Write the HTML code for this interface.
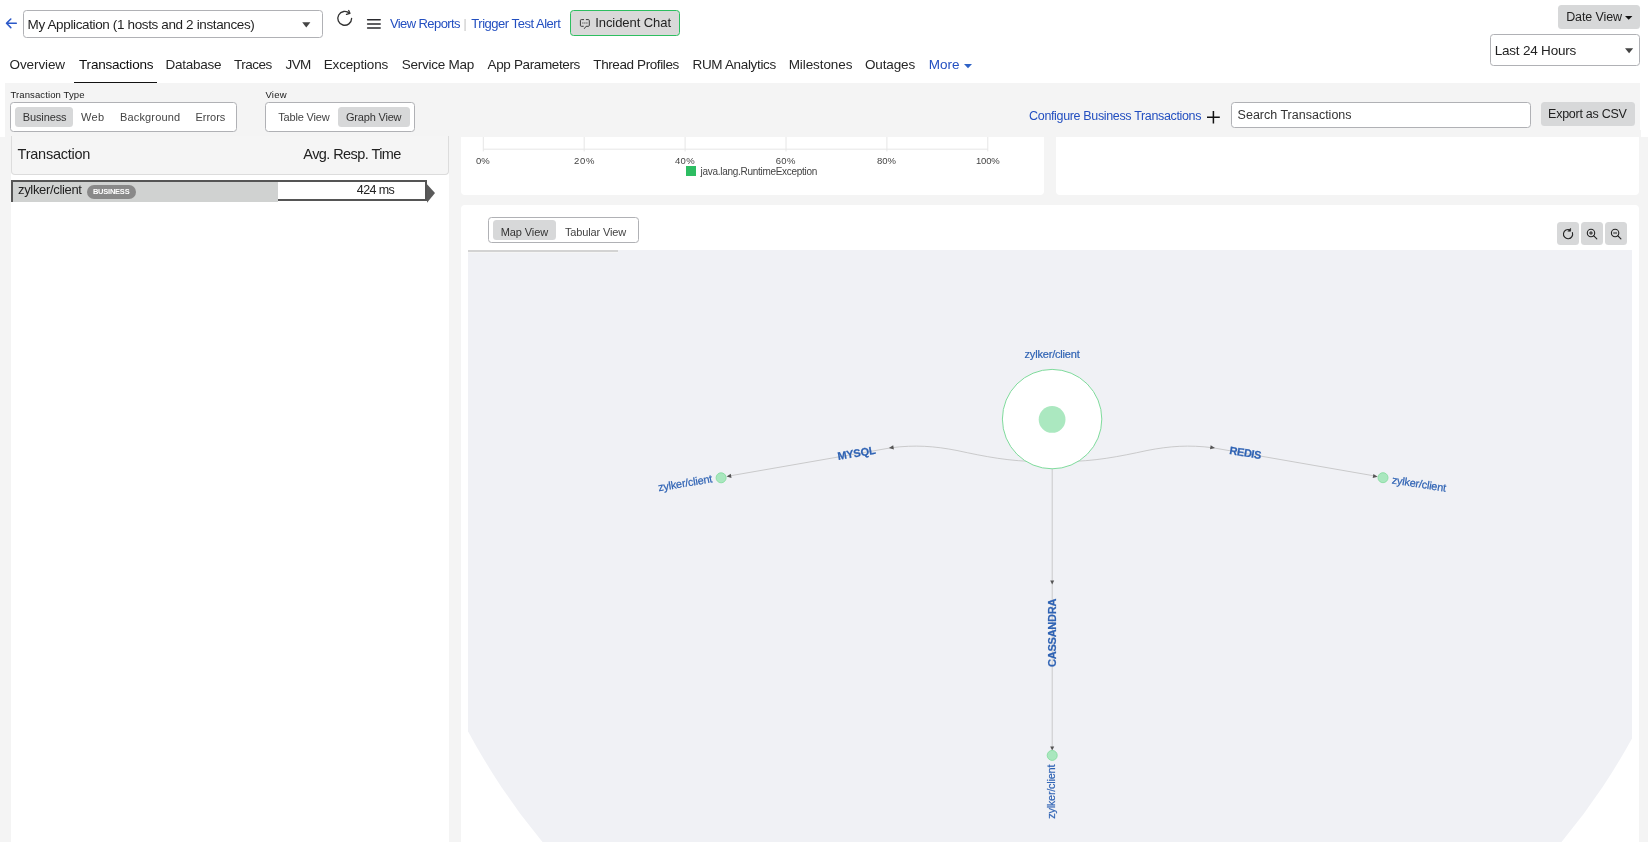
<!DOCTYPE html>
<html><head><meta charset="utf-8"><title>Transactions</title>
<style>
html,body{margin:0;padding:0;overflow:hidden;}
body{width:1648px;height:842px;overflow:hidden;background:#fff;font-family:"Liberation Sans",sans-serif;position:relative;}
.a{position:absolute;box-sizing:border-box;}
.t{position:absolute;white-space:nowrap;line-height:1;font-family:"Liberation Sans",sans-serif;}
.box{border:1px solid #b0b1b5;border-radius:3.5px;background:#fff;}
.pill{background:#d7d8d9;border-radius:3.5px;}
.panel{background:#fff;border-radius:4px;}
svg{position:absolute;overflow:visible;}
</style></head><body>
<!-- page gray areas -->
<div class="a" style="left:5px;top:83px;width:1635px;height:54px;background:#f4f4f4"></div>
<div class="a" style="left:0;top:137px;width:1648px;height:705px;background:#f4f4f4"></div>

<!-- top bar -->
<svg style="left:4px;top:16px" width="16" height="14" viewBox="0 0 16 14"><path d="M12.3 7.3H2.9M6.8 3 2.5 7.3l4.3 4.3" fill="none" stroke="#2b58c8" stroke-width="1.55" stroke-linecap="round" stroke-linejoin="round"/></svg>
<div class="a box" style="left:23px;top:10px;width:299.5px;height:27.5px"></div>
<svg style="left:302px;top:22px" width="9" height="6" viewBox="0 0 9 6"><path d="M0.2 0.2h8.2L4.3 5.4z" fill="#444"/></svg>
<svg style="left:336px;top:9px" width="18" height="18" viewBox="336 9 18 18" fill="none" stroke="#333" stroke-width="1.35" stroke-linecap="round" stroke-linejoin="round"><path d="M351.6 18.4A6.9 6.9 0 1 1 349.5 13.4"/><path d="M348.7 10.5l1.2 2.8-3.4 1"/></svg>
<svg style="left:366px;top:17px" width="16" height="13" viewBox="366 17 16 13"><path d="M367.6 19.65h12.6M367.6 23.95h12.6M367.6 28.1h12.6" stroke="#2a2a2e" stroke-width="1.5" stroke-linecap="round" fill="none"/></svg>
<div class="a" style="left:569.8px;top:9.8px;width:110.4px;height:26.4px;background:#d9d9d9;border:1.2px solid #2dbe60;border-radius:3.5px"></div>
<svg style="left:578px;top:17px" width="14" height="14" viewBox="578 17 14 14" fill="none" stroke="#3a3a3a" stroke-width="1" stroke-linecap="round" stroke-linejoin="round"><path d="M586.3 19.6h2.1a.9 .9 0 0 1 .9 .9v4.9a.9 .9 0 0 1-.9 .9h-2.3l-1.7 2.2"/><path d="M583.3 26.3h-2a.9 .9 0 0 1-.9-.9v-4.9a.9 .9 0 0 1 .9-.9h2.3"/><path d="M582.5 23h.7M584.5 23h.7M586.5 23h.7" stroke-width="0.9" stroke="#555"/></svg>
<div class="a pill" style="left:1558px;top:5px;width:82px;height:24px;background:#d7d8d9"></div>
<svg style="left:1624.5px;top:16px" width="8" height="4" viewBox="0 0 8 4"><path d="M0 0h7.4L3.7 3.8z" fill="#111"/></svg>
<div class="a box" style="left:1490px;top:34px;width:150px;height:32px"></div>
<svg style="left:1625px;top:48px" width="9" height="6" viewBox="0 0 9 6"><path d="M0 0.2h8.2L4.1 5.2z" fill="#444"/></svg>

<!-- nav -->
<div class="a" style="left:74px;top:82px;width:83px;height:1px;background:#111"></div>
<svg style="left:964px;top:63.6px" width="9" height="5" viewBox="0 0 9 5"><path d="M0 0h8L4 4.2z" fill="#2f62c6"/></svg>

<!-- filter bar -->
<div class="a box" style="left:10px;top:102px;width:227px;height:30px"></div>
<div class="a pill" style="left:15px;top:107px;width:58px;height:20px"></div>
<div class="a box" style="left:265px;top:102px;width:150px;height:30px"></div>
<div class="a pill" style="left:338px;top:107px;width:72px;height:20px"></div>
<svg style="left:1206px;top:110px" width="15" height="15" viewBox="0 0 15 15"><path d="M7.4 1v12.6M1 7.3h12.8" stroke="#111" stroke-width="1.5" fill="none"/></svg>
<div class="a box" style="left:1231px;top:102px;width:300px;height:26px"></div>
<div class="a pill" style="left:1541px;top:102px;width:94px;height:24px;background:#d7d8d9"></div>

<!-- left panel -->
<div class="a" style="left:11px;top:137px;width:438px;height:705px;background:#fff"></div>
<div class="a" style="left:11px;top:136px;width:438px;height:38.5px;background:#f5f5f5;border:1px solid #dcdcdc;border-top:none;border-radius:0 0 4px 4px"></div>
<!-- row -->
<div class="a" style="left:11px;top:180px;width:416px;height:21.4px;background:#fff;border:2px solid #555;border-left:none"></div>
<div class="a" style="left:11px;top:182px;width:267px;height:19.7px;background:#d0d2d1;border-left:2px solid #555"></div>
<svg style="left:427px;top:184px" width="9" height="19" viewBox="0 0 9 19"><path d="M0 0.3 8 9 0 18.7z" fill="#5a5a5a"/></svg>
<div class="a" style="left:87px;top:185px;width:49px;height:14px;background:#898989;border-radius:7px"></div>

<!-- chart panels -->
<div class="a panel" style="left:461px;top:133px;width:583px;height:62px"></div>
<div class="a panel" style="left:1056px;top:133px;width:583px;height:62px"></div>
<div class="a" style="left:461px;top:130px;width:1180px;height:7px;background:#f4f4f4"></div>
<svg style="left:461px;top:137px" width="583" height="20" viewBox="461 137 583 20"><path d="M483.3 149.2H987.8" stroke="#e6e6e6" stroke-width="1" fill="none"/><path d="M483.3 137v14.4M584.2 137v14.4M685.1 137v14.4M786 137v14.4M886.9 137v14.4M987.8 137v14.4" stroke="#e6e6e6" stroke-width="1" fill="none"/></svg>
<div class="a" style="left:686px;top:166px;width:10px;height:10px;background:#2dbd62"></div>

<!-- map panel -->
<div class="a panel" style="left:461px;top:205px;width:1178px;height:637px;border-radius:4px 4px 0 0"></div>
<div class="a box" style="left:488px;top:217px;width:151px;height:26px"></div>
<div class="a pill" style="left:493px;top:220px;width:63px;height:20px"></div>
<div class="a pill" style="left:1557px;top:222px;width:22px;height:23px"></div>
<div class="a pill" style="left:1581px;top:222px;width:22px;height:23px"></div>
<div class="a pill" style="left:1605px;top:222px;width:22px;height:23px"></div>
<svg style="left:1557px;top:222px" width="70" height="23" viewBox="1557 222 70 23" fill="none" stroke="#222" stroke-width="1.1" stroke-linecap="round">
<path d="M1572.4 232.6A4.6 4.6 0 1 1 1569.9 229.9"/><path d="M1570.6 228.6v2.6h-2.4z" fill="#222" stroke-width="0.6"/>
<circle cx="1591" cy="233" r="3.7"/><path d="M1593.8 235.8l3 3"/><path d="M1589.5 233h3M1591 231.5v3" stroke-width="1"/>
<circle cx="1615.1" cy="233" r="3.7"/><path d="M1617.9 235.8l3 3"/><path d="M1613.6 233h3" stroke-width="1"/>
</svg>
<svg style="left:468px;top:250px;will-change:transform" width="1164" height="592" viewBox="468 250 1164 592">
<defs><clipPath id="mc"><rect x="468" y="250" width="1164" height="592"/></clipPath></defs>
<g clip-path="url(#mc)">
<circle cx="1052" cy="419" r="662.2" fill="#f0f1f5"/>
<rect x="468" y="250" width="150" height="3" fill="#f5f5f5"/><rect x="468" y="250" width="150" height="2" fill="#d3d3d3"/>
<g fill="none" stroke="#bcbcbc" stroke-width="0.75">
<path d="M728.5 476.1 891 447.8C 915 444.6 935 446.2 957 450.5 C 985 456.6 1010 461.5 1040 461.6"/>
<path d="M1375.5 476.1 1213 447.8C 1189 444.6 1169 446.2 1147 450.5 C 1119 456.6 1094 461.5 1064 461.6"/>
<path d="M1052.2 465V749"/>
</g>
<g fill="#555">
<path d="M726.5 476.6l4.3-2.8 0.7 4.1z"/>
<path d="M888.9 448.1l4.3-2.8 0.7 4.1z"/>
<path d="M1377.7 476.7l-4.3-2.8-0.7 4.1z"/>
<path d="M1215 448l-4.3-2.8-0.7 4.1z"/>
<path d="M1052.2 584.5l-2-4h4z"/>
<path d="M1052.2 750.5l-2-4h4z"/>
</g>
<circle cx="1052.1" cy="419.1" r="49.7" fill="#fff" stroke="#7fdb9c" stroke-width="1"/>
<circle cx="1052.1" cy="419.4" r="13.4" fill="#abe8c0"/>
<g fill="#a9e7be" stroke="#88dca2" stroke-width="0.9">
<circle cx="721.1" cy="477.8" r="5"/>
<circle cx="1383" cy="477.7" r="5"/>
<circle cx="1052.2" cy="755.4" r="5"/>
</g>
<g font-family="Liberation Sans, sans-serif" font-size="11" fill="#2f63b4" stroke="#2f63b4" stroke-width="0.2">
<text x="1024.5" y="358.2" textLength="55.3">zylker/client</text>
<text transform="translate(658.8,491.3) rotate(-9.6)" textLength="54.8">zylker/client</text>
<text transform="translate(1391.4,483.4) rotate(8.8)" textLength="54.8">zylker/client</text>
<text transform="translate(1055.2,818.8) rotate(-90)" textLength="54.3">zylker/client</text>
<g font-weight="bold">
<text transform="translate(838.2,460.1) rotate(-9.6)" textLength="38.4">MYSQL</text>
<text transform="translate(1229,454) rotate(9.2)" textLength="32.2">REDIS</text>
<text transform="translate(1055.5,667) rotate(-90)" textLength="68.5">CASSANDRA</text>
</g></g>
</g></svg>

<div id="txt" style="position:absolute;left:0;top:0;width:1648px;height:842px;will-change:transform">
<span class="t" style="left:27.60px;top:17.75px;font-size:13.5px;letter-spacing:-0.369px;color:#1f1f1f;font-weight:400">My Application (1 hosts and 2 instances)</span>
<span class="t" style="left:389.90px;top:17.00px;font-size:13px;letter-spacing:-0.582px;color:#234fc0;font-weight:400">View Reports</span>
<span class="t" style="left:463.40px;top:18.00px;font-size:12px;letter-spacing:0.000px;color:#c4c4c4;font-weight:400">|</span>
<span class="t" style="left:471.30px;top:17.00px;font-size:13px;letter-spacing:-0.471px;color:#234fc0;font-weight:400">Trigger Test Alert</span>
<span class="t" style="left:595.20px;top:16.00px;font-size:13px;letter-spacing:-0.067px;color:#222;font-weight:400">Incident Chat</span>
<span class="t" style="left:1566.20px;top:10.75px;font-size:12.5px;letter-spacing:-0.100px;color:#222;font-weight:400">Date View</span>
<span class="t" style="left:1494.70px;top:43.75px;font-size:13.5px;letter-spacing:-0.200px;color:#222;font-weight:400">Last 24 Hours</span>
<span class="t" style="left:9.60px;top:57.75px;font-size:13.5px;letter-spacing:-0.114px;color:#262626;font-weight:400">Overview</span>
<span class="t" style="left:79.10px;top:57.75px;font-size:13.5px;letter-spacing:-0.218px;color:#0c0c0c;font-weight:400">Transactions</span>
<span class="t" style="left:165.40px;top:57.75px;font-size:13.5px;letter-spacing:-0.229px;color:#262626;font-weight:400">Database</span>
<span class="t" style="left:233.90px;top:57.75px;font-size:13.5px;letter-spacing:-0.480px;color:#262626;font-weight:400">Traces</span>
<span class="t" style="left:285.50px;top:57.75px;font-size:13.5px;letter-spacing:-0.600px;color:#262626;font-weight:400">JVM</span>
<span class="t" style="left:323.80px;top:57.75px;font-size:13.5px;letter-spacing:-0.178px;color:#262626;font-weight:400">Exceptions</span>
<span class="t" style="left:401.70px;top:57.75px;font-size:13.5px;letter-spacing:-0.240px;color:#262626;font-weight:400">Service Map</span>
<span class="t" style="left:487.60px;top:57.75px;font-size:13.5px;letter-spacing:-0.369px;color:#262626;font-weight:400">App Parameters</span>
<span class="t" style="left:593.30px;top:57.75px;font-size:13.5px;letter-spacing:-0.400px;color:#262626;font-weight:400">Thread Profiles</span>
<span class="t" style="left:692.50px;top:57.75px;font-size:13.5px;letter-spacing:-0.333px;color:#262626;font-weight:400">RUM Analytics</span>
<span class="t" style="left:788.70px;top:57.75px;font-size:13.5px;letter-spacing:-0.089px;color:#262626;font-weight:400">Milestones</span>
<span class="t" style="left:864.90px;top:57.75px;font-size:13.5px;letter-spacing:-0.133px;color:#262626;font-weight:400">Outages</span>
<span class="t" style="left:928.70px;top:57.75px;font-size:13.5px;letter-spacing:0.000px;color:#234fc0;font-weight:400">More</span>
<span class="t" style="left:10.50px;top:89.75px;font-size:9.5px;letter-spacing:0.107px;color:#1a1a1a;font-weight:400">Transaction Type</span>
<span class="t" style="left:22.70px;top:111.50px;font-size:11px;letter-spacing:-0.114px;color:#333;font-weight:400">Business</span>
<span class="t" style="left:81.00px;top:111.50px;font-size:11px;letter-spacing:0.400px;color:#444;font-weight:400">Web</span>
<span class="t" style="left:119.90px;top:111.50px;font-size:11px;letter-spacing:0.178px;color:#444;font-weight:400">Background</span>
<span class="t" style="left:195.40px;top:111.50px;font-size:11px;letter-spacing:0.000px;color:#444;font-weight:400">Errors</span>
<span class="t" style="left:265.40px;top:89.75px;font-size:9.5px;letter-spacing:0.267px;color:#1a1a1a;font-weight:400">View</span>
<span class="t" style="left:278.20px;top:111.50px;font-size:11px;letter-spacing:-0.178px;color:#444;font-weight:400">Table View</span>
<span class="t" style="left:345.90px;top:111.50px;font-size:11px;letter-spacing:-0.178px;color:#333;font-weight:400">Graph View</span>
<span class="t" style="left:1029.10px;top:109.75px;font-size:12.5px;letter-spacing:-0.347px;color:#234fc0;font-weight:400">Configure Business Transactions</span>
<span class="t" style="left:1237.60px;top:108.75px;font-size:12.5px;letter-spacing:0.000px;color:#333;font-weight:400">Search Transactions</span>
<span class="t" style="left:1548.10px;top:107.75px;font-size:12.5px;letter-spacing:-0.267px;color:#222;font-weight:400">Export as CSV</span>
<span class="t" style="left:17.60px;top:146.75px;font-size:14.5px;letter-spacing:-0.240px;color:#222;font-weight:400">Transaction</span>
<span class="t" style="left:303.30px;top:146.75px;font-size:14.5px;letter-spacing:-0.571px;color:#222;font-weight:400">Avg. Resp. Time</span>
<span class="t" style="left:18.00px;top:183.00px;font-size:13px;letter-spacing:-0.333px;color:#222;font-weight:400">zylker/client</span>
<span class="t" style="left:92.90px;top:187.75px;font-size:7.5px;letter-spacing:-0.229px;color:#fff;font-weight:700">BUSINESS</span>
<span class="t" style="left:356.80px;top:183.75px;font-size:12.5px;letter-spacing:-0.600px;color:#222;font-weight:400">424 ms</span>
<span class="t" style="left:475.90px;top:155.75px;font-size:9.5px;letter-spacing:0.000px;color:#444;font-weight:400">0%</span>
<span class="t" style="left:573.90px;top:155.75px;font-size:9.5px;letter-spacing:0.800px;color:#444;font-weight:400">20%</span>
<span class="t" style="left:674.90px;top:155.75px;font-size:9.5px;letter-spacing:0.400px;color:#444;font-weight:400">40%</span>
<span class="t" style="left:775.70px;top:155.75px;font-size:9.5px;letter-spacing:0.400px;color:#444;font-weight:400">60%</span>
<span class="t" style="left:877.00px;top:155.75px;font-size:9.5px;letter-spacing:0.000px;color:#444;font-weight:400">80%</span>
<span class="t" style="left:976.10px;top:155.75px;font-size:9.5px;letter-spacing:-0.267px;color:#444;font-weight:400">100%</span>
<span class="t" style="left:700.60px;top:166.50px;font-size:10px;letter-spacing:-0.288px;color:#444;font-weight:400">java.lang.RuntimeException</span>
<span class="t" style="left:500.80px;top:226.50px;font-size:11px;letter-spacing:-0.114px;color:#333;font-weight:400">Map View</span>
<span class="t" style="left:565.00px;top:226.50px;font-size:11px;letter-spacing:-0.145px;color:#444;font-weight:400">Tabular View</span>
</div>
</body></html>
